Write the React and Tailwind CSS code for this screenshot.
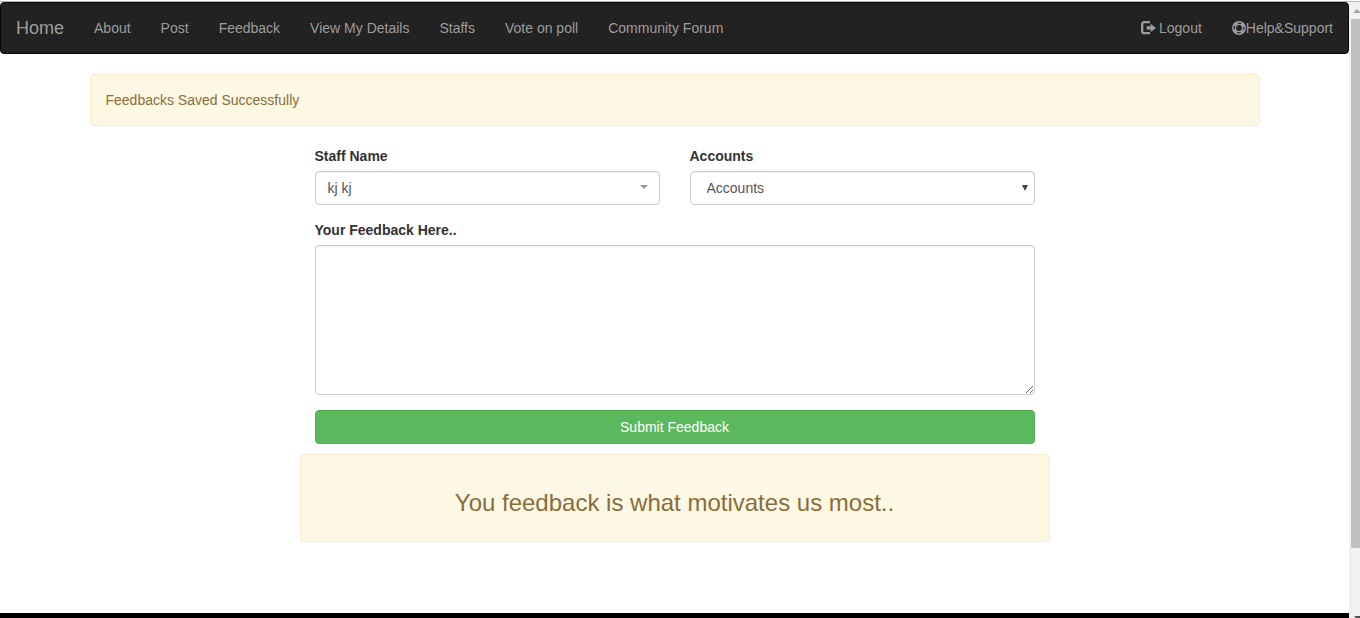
import React from 'react';

const links = ['About', 'Post', 'Feedback', 'View My Details', 'Staffs', 'Vote on poll', 'Community Forum'];

const linkClass = 'block px-[15px] py-[15px] whitespace-nowrap hover:text-white';
const fieldClass =
  'block h-[34px] w-full appearance-none rounded border border-[#cccccc] bg-white text-sm leading-5 text-[#555555] shadow-[inset_0_1px_1px_rgba(0,0,0,0.075)]';

function LogoutIcon() {
  return (
    <svg className="h-[14px] w-[15px] shrink-0" viewBox="0 0 15 14" aria-hidden="true">
      <path d="M9 1.2H3.2a2 2 0 0 0-2 2v7a2 2 0 0 0 2 2H9" fill="none" stroke="currentColor" strokeWidth="2.3" />
      <path d="M5.6 5.2h4V2.8L15 6.9l-5.4 4.2V8.6h-4z" fill="currentColor" />
    </svg>
  );
}

function SupportIcon() {
  return (
    <svg className="h-[14px] w-[14px] shrink-0" viewBox="0 0 14 14" aria-hidden="true">
      <circle cx="7" cy="7" r="6.2" fill="none" stroke="currentColor" strokeWidth="1.5" />
      <circle cx="7" cy="7" r="3.6" fill="none" stroke="currentColor" strokeWidth="1.4" />
      <circle cx="7" cy="7" r="5" fill="none" stroke="currentColor" strokeWidth="3" strokeDasharray="3.9 3.954" strokeDashoffset="-1.98" />
    </svg>
  );
}

function Navbar() {
  return (
    <nav className="flex min-h-[52px] items-start justify-between rounded border border-[#080808] bg-[#222222] text-sm leading-5 text-[#9d9d9d]">
      <div className="flex">
        <a href="#home" className="block px-[15px] py-[15px] text-lg leading-5 hover:text-white">Home</a>
        <ul className="flex">
          {links.map((label) => (
            <li key={label}>
              <a href="#section" className={linkClass}>{label}</a>
            </li>
          ))}
        </ul>
      </div>
      <ul className="flex">
        <li>
          <a href="#logout" className="flex items-center gap-[3px] px-[15px] py-[15px] hover:text-white">
            <LogoutIcon />
            Logout
          </a>
        </li>
        <li>
          <a href="#help" className="flex items-center px-[15px] py-[15px] hover:text-white">
            <SupportIcon />
            Help&amp;Support
          </a>
        </li>
      </ul>
    </nav>
  );
}

function Scrollbar() {
  return (
    <div className="flex w-[11px] shrink-0 flex-col overflow-hidden bg-[#f1f1f1] pl-[2px]" aria-hidden="true">
      <div className="h-[17px] pt-[7px] pl-[2px]">
        <svg className="block h-1 w-2" viewBox="0 0 8 4"><path d="M0 4l4-4 4 4z" fill="#a3a3a3" /></svg>
      </div>
      <div className="grow-[529] bg-[#c1c1c1]" />
      <div className="grow-[68]" />
      <div className="h-[2px] pl-[3px]">
        <svg className="block h-[2px] w-2" viewBox="0 0 8 2"><path d="M0 0h8v2H2z" fill="#505050" /></svg>
      </div>
    </div>
  );
}

export default function App() {
  return (
    <div className="flex min-h-screen flex-col bg-white font-['Liberation_Sans',Arial,sans-serif] text-sm leading-5 text-[#333333]">
      <div className="h-[2px] border-b border-[#b6b9b9]" />
      <div className="flex grow">
        <div className="flex min-w-0 grow flex-col">
          <Navbar />
          <main className="mx-auto w-full max-w-[1170px] grow pt-5">
            <div role="status" className="mb-5 rounded border border-[#faebcc] bg-[#fcf8e3] p-[15px] text-[#8a6d3b]">
              Feedbacks Saved Successfully
            </div>
            <div className="mx-auto max-w-[750px]">
              <form className="px-[15px]" onSubmit={(e) => e.preventDefault()}>
                <div className="mb-[15px] grid grid-cols-2 gap-[30px]">
                  <div>
                    <label htmlFor="staff" className="mb-[5px] block font-bold">Staff Name</label>
                    <div className="relative">
                      <select id="staff" className={fieldClass + ' px-3'}>
                        <option>kj kj</option>
                      </select>
                      <svg className="pointer-events-none absolute top-[14px] right-3 h-1 w-2" viewBox="0 0 8 4" aria-hidden="true">
                        <path d="M0 0h8L4 4z" fill="#999999" />
                      </svg>
                    </div>
                  </div>
                  <div>
                    <label htmlFor="accounts" className="mb-[5px] block font-bold">Accounts</label>
                    <div className="relative">
                      <select id="accounts" className={fieldClass + ' px-4'}>
                        <option>Accounts</option>
                      </select>
                      <svg className="pointer-events-none absolute top-[14px] right-[7px] h-[6px] w-[6px]" viewBox="0 0 6 6" aria-hidden="true">
                        <path d="M0 0h6L3 6z" fill="#444444" />
                      </svg>
                    </div>
                  </div>
                </div>
                <label htmlFor="message" className="mb-[5px] block font-bold">Your Feedback Here..</label>
                <textarea
                  id="message"
                  className="mb-[15px] block h-[150px] w-full resize-y rounded border border-[#cccccc] bg-white px-3 py-[6px] text-[#555555] shadow-[inset_0_1px_1px_rgba(0,0,0,0.075)]"
                />
                <button type="submit" className="mb-[10px] block h-[34px] w-full rounded border border-[#4cae4c] bg-[#5cb85c] px-3 text-white">
                  Submit Feedback
                </button>
              </form>
              <div className="rounded border border-[#faebcc] bg-[#fcf8e3] px-[15px] pt-[35px] pb-[25px] text-center text-[#8a6d3b]">
                <h3 className="text-2xl leading-[26px]">You feedback is what motivates us most..</h3>
              </div>
            </div>
          </main>
          <footer className="h-[5px] bg-black" />
        </div>
        <Scrollbar />
      </div>
    </div>
  );
}
